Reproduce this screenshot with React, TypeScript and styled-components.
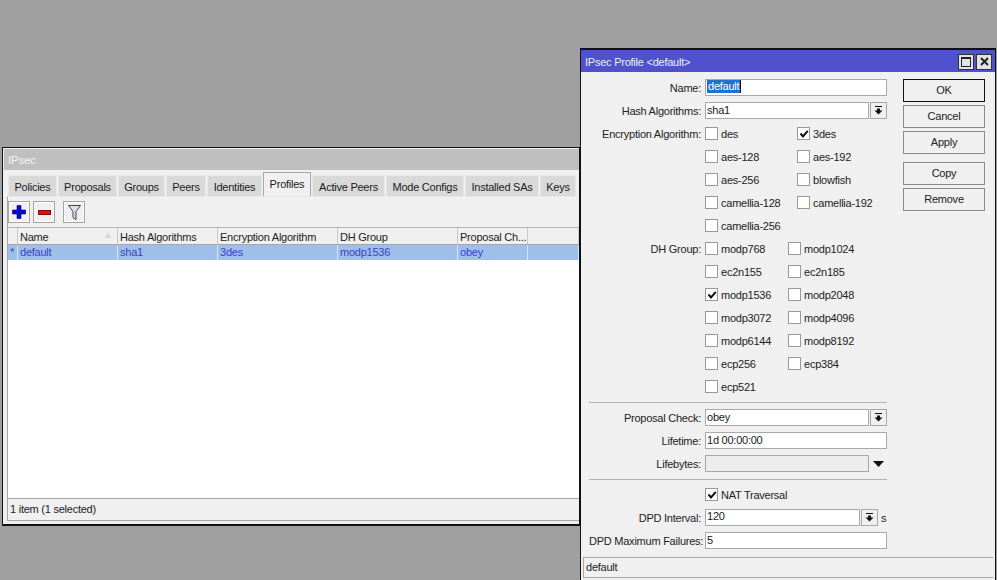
import React from "react";
import styled, { createGlobalStyle } from "styled-components";

const Global = createGlobalStyle`
  html, body { margin: 0; padding: 0; background: #a0a0a0; }
  * { box-sizing: border-box; }
`;
const Desktop = styled.div`
  position: relative; width: 997px; height: 580px; overflow: hidden; background: #a0a0a0;
  font-family: "Liberation Sans", Arial, sans-serif; font-size: 11px; letter-spacing: -0.24px; color: #1a1a1a;
`;
const MainWindow = styled.div`
  position: absolute; left: 2px; top: 147px; width: 579px; height: 379px;
  background: #f0f0f0; border: 1px solid #111; border-right-width: 2px; border-bottom-width: 2px;
  padding: 1px 0 0 2px; display: flex; flex-direction: column;
`;
const MainTitle = styled.div`
  height: 21px; background: #bfbfbf; color: #f4f4f4; font-size: 11.5px; line-height: 22px; padding-left: 4px; margin-left: -1px; flex: none;
`;
const TabBar = styled.div`
  display: flex; height: 25px; margin: 2px 0 0 3px; align-items: flex-end; flex: none; gap: 1px;
`;
const Tab = styled.div<{ $w: number; $active?: boolean }>`
  width: ${p => p.$w}px; height: ${p => (p.$active ? 25 : 22)}px; text-align: center;
  line-height: 23px; background: ${p => (p.$active ? "#f0f0f0" : "#d9d9d9")};
  border: 1px solid ${p => (p.$active ? "#a6a6a6" : "#e6e6e6")}; border-bottom: none; white-space: nowrap;
`;
const Panel = styled.div`
  flex: 1; display: flex; flex-direction: column; margin: -1px 0 3px 2px; border-left: 1px solid #a8a8a8; border-bottom: 1px solid #a6a6a6; border-top: 1px solid #e8e8e8; min-height: 0;
`;
const Toolbar = styled.div`
  display: flex; height: 30px; padding: 4px 0 0 0; flex: none;
`;
const ToolBtn = styled.div<{ $gap?: number }>`
  width: 22px; height: 22px; margin-right: ${p => p.$gap ?? 0}px; background: #f0f0f0; border: 1px solid #a4a4a4; box-shadow: inset 0 0 0 1px #fff;
  display: flex; align-items: center; justify-content: center; flex: none;
`;
const GRID = "10px 100px 100px 120px 120px 70px 1fr";
const HeaderRow = styled.div`
  display: grid; grid-template-columns: ${GRID}; height: 18px; background: #f0f0f0; flex: none;
  border-top: 1px solid #b4b4b4; border-bottom: 1px solid #a6a6a6;
`;
const HeadCell = styled.div`
  position: relative; padding-left: 2px; line-height: 18px; border-right: 1px solid #c8c8c8; white-space: nowrap; overflow: hidden; color: #222;
`;
const SortMark = styled.span`
  position: absolute; right: 6px; top: 4px; width: 0; height: 0; border-left: 3px solid transparent; border-right: 3px solid transparent; border-bottom: 6px solid #d8d8d8;
`;
const DataRow = styled.div`
  display: grid; grid-template-columns: ${GRID}; height: 15px; background: #9dbfe8; color: #3c3fc8; flex: none;
`;
const DataCell = styled.div`
  padding-left: 2px; line-height: 14px; border-right: 1px solid #d6e4f5; white-space: nowrap;
`;
const TableBody = styled.div`
  flex: 1; background: #fff; border-bottom: 1px solid #a6a6a6;
`;
const ItemCount = styled.div`
  height: 21px; line-height: 21px; padding-left: 2px; flex: none; color: #1a1a2a;
`;

const Dialog = styled.div`
  position: absolute; left: 580px; top: 48px; width: 416px; height: 532px; background: #f0f0f0;
  border: 2px solid #111; border-right-width: 1px; border-left-width: 1px; border-bottom: none; display: flex; flex-direction: column;
`;
const DlgTitle = styled.div`
  height: 22px; background: #4f52cc; color: #eef; font-size: 11px; line-height: 22px; padding: 1px 3px 0 4px; display: flex; align-items: center; justify-content: space-between; flex: none;
`;
const WinBtns = styled.div`display: flex; gap: 2px;`;
const WinBtn = styled.div`
  width: 16px; height: 16px; background: #e2e2e2; border: 1px solid #333; display: flex; align-items: center; justify-content: center;
`;
const DlgBody = styled.div`
  flex: 1; display: flex; min-height: 0; padding: 4px 0 0 8px;
`;
const Form = styled.div`
  width: 298px; flex: none; display: flex; flex-direction: column;
`;
const Row = styled.div`
  display: grid; grid-template-columns: 113px 1fr; column-gap: 3px; height: 23px; align-items: center; flex: none;
`;
const Label = styled.div`
  text-align: right; white-space: nowrap; color: #222; padding-right: 1px;
`;
const FieldWrap = styled.div`
  display: flex; align-items: center; height: 17px;
`;
const Input = styled.div<{ $top?: boolean; $off?: boolean }>`
  flex: 1; height: 17px; background: ${p => (p.$off ? "#ececec" : "#fff")}; border: 1px solid #a8a8a8; padding-left: 1px;
  line-height: ${p => (p.$top ? 12 : 15)}px; white-space: nowrap; color: #1a1a1a; min-width: 0;
`;
const Selected = styled.span`
  background: #1a74d8; color: #fff; padding: 0 1px; display: inline-block; height: 13px; line-height: 13px; vertical-align: top; border-right: 1px solid #111;
`;
const DropBtn = styled.div`
  width: 17px; height: 17px; margin-left: 1px; border: 1px solid #a8a8a8; background: #f0f0f0; display: flex; align-items: center; justify-content: center; flex: none;
`;
const Unit = styled.span`margin-left: 3px; width: 6px; flex: none;`;
const PlainArrow = styled.div`
  width: 18px; display: flex; justify-content: center; flex: none;
`;
const Checks = styled.div<{ $second: number }>`
  display: grid; grid-template-columns: ${p => p.$second}px 1fr; align-items: center; height: 100%;
`;
const CheckItem = styled.label`
  display: flex; align-items: center; gap: 3px; white-space: nowrap; color: #222;
`;
const Box = styled.span`
  width: 13px; height: 13px; background: #fff; border: 1px solid #999; display: inline-flex; align-items: center; justify-content: center; flex: none;
`;
const Sep = styled.div`
  height: 8px; flex: none; display: flex; align-items: center;
  &::before { content: ""; display: block; width: 100%; height: 1px; background: #b4b4b4; }
`;
const Buttons = styled.div`
  margin: 3px 0 0 16px; width: 82px; display: flex; flex-direction: column; flex: none;
`;
const Btn = styled.div<{ $primary?: boolean; $mt?: number }>`
  height: 23px; margin-top: ${p => p.$mt ?? 3}px; border: 1px solid ${p => (p.$primary ? "#111" : "#8a8a8a")}; background: #f0f0f0;
  text-align: center; line-height: 21px; color: #222; flex: none;
  &:first-child { margin-top: 0; }
`;
const DlgStatus = styled.div`
  height: 21px; margin: 0 2px 2px 2px; border-top: 1px solid #a8a8a8; border-left: 1px solid #a8a8a8; border-bottom: 1px solid #a8a8a8; line-height: 19px; padding-left: 2px; flex: none; color: #222;
`;

const Tick = () => (
  <svg width="10" height="10" viewBox="0 0 10 10"><path d="M1.5 4.5 L4 7.5 L8.8 1.8" fill="none" stroke="#111" strokeWidth="2" /></svg>
);
const Check = ({ label, on }: { label: string; on?: boolean }) => (
  <CheckItem><Box>{on && <Tick />}</Box>{label}</CheckItem>
);
const DropIcon = () => (
  <svg width="9" height="9" viewBox="0 0 9 9"><path d="M1 0H8V1H1Z M3 2.5H6V4.5H8.5L4.5 8.5L0.5 4.5H3Z" fill="#111" /></svg>
);
const Arrow = () => (
  <svg width="11" height="6" viewBox="0 0 11 6"><path d="M0 0H11L5.5 6Z" fill="#111" /></svg>
);

const tabs: [string, number][] = [
  ["Policies", 49], ["Proposals", 59], ["Groups", 47], ["Peers", 40], ["Identities", 55], ["Profiles", 48],
  ["Active Peers", 73], ["Mode Configs", 78], ["Installed SAs", 74], ["Keys", 36],
];
const enc: [string, boolean, string, boolean][] = [
  ["des", false, "3des", true], ["aes-128", false, "aes-192", false], ["aes-256", false, "blowfish", false],
  ["camellia-128", false, "camellia-192", false],
];
const dh: [string, boolean, string, boolean][] = [
  ["modp768", false, "modp1024", false], ["ec2n155", false, "ec2n185", false], ["modp1536", true, "modp2048", false],
  ["modp3072", false, "modp4096", false], ["modp6144", false, "modp8192", false], ["ecp256", false, "ecp384", false],
];

export default function App() {
  return (
    <Desktop>
      <Global />
      <MainWindow>
        <MainTitle>IPsec</MainTitle>
        <TabBar>
          {tabs.map(([t, w]) => <Tab key={t} $w={w} $active={t === "Profiles"}>{t}</Tab>)}
        </TabBar>
        <Panel>
          <Toolbar>
            <ToolBtn $gap={3}>
              <svg width="14" height="14" viewBox="0 0 14 14"><path d="M5 0.5H9V5H13.5V9H9V13.5H5V9H0.5V5H5Z" fill="#0808d8" stroke="#000050" strokeWidth="0.6" /></svg>
            </ToolBtn>
            <ToolBtn $gap={8}>
              <svg width="13" height="5" viewBox="0 0 13 5"><rect x="0.5" y="0.5" width="12" height="4" fill="#e01010" stroke="#801010" /></svg>
            </ToolBtn>
            <ToolBtn>
              <svg width="13" height="15" viewBox="0 0 13 15"><path d="M0.5 0.5H12.5L8 6.5V14.5L5 12.5V6.5Z" fill="#d4e2ee" stroke="#444" strokeWidth="1" /></svg>
            </ToolBtn>
          </Toolbar>
          <HeaderRow>
            <HeadCell />
            <HeadCell>Name<SortMark /></HeadCell>
            <HeadCell>Hash Algorithms</HeadCell>
            <HeadCell>Encryption Algorithm</HeadCell>
            <HeadCell>DH Group</HeadCell>
            <HeadCell>Proposal Ch...</HeadCell>
            <HeadCell />
          </HeaderRow>
          <DataRow>
            <DataCell>*</DataCell>
            <DataCell>default</DataCell>
            <DataCell>sha1</DataCell>
            <DataCell>3des</DataCell>
            <DataCell>modp1536</DataCell>
            <DataCell>obey</DataCell>
            <DataCell />
          </DataRow>
          <TableBody />
          <ItemCount>1 item (1 selected)</ItemCount>
        </Panel>
      </MainWindow>

      <Dialog>
        <DlgTitle>
          <span>IPsec Profile &lt;default&gt;</span>
          <WinBtns>
            <WinBtn><svg width="10" height="10" viewBox="0 0 10 10"><rect x="0.5" y="0.5" width="9" height="9" fill="none" stroke="#222" /><rect x="0" y="0" width="10" height="2" fill="#222" /></svg></WinBtn>
            <WinBtn><svg width="9" height="9" viewBox="0 0 9 9"><path d="M1 1L8 8M8 1L1 8" stroke="#222" strokeWidth="2" /></svg></WinBtn>
          </WinBtns>
        </DlgTitle>
        <DlgBody>
          <Form>
            <Row><Label>Name:</Label><FieldWrap><Input><Selected>default</Selected></Input></FieldWrap></Row>
            <Row><Label>Hash Algorithms:</Label><FieldWrap><Input>sha1</Input><DropBtn><DropIcon /></DropBtn></FieldWrap></Row>
            {enc.map((r, i) => (
              <Row key={r[0]}>
                <Label>{i === 0 ? "Encryption Algorithm:" : ""}</Label>
                <Checks $second={92}><Check label={r[0]} on={r[1]} /><Check label={r[2]} on={r[3]} /></Checks>
              </Row>
            ))}
            <Row><Label /><Check label="camellia-256" /></Row>
            {dh.map((r, i) => (
              <Row key={r[0]}>
                <Label>{i === 0 ? "DH Group:" : ""}</Label>
                <Checks $second={83}><Check label={r[0]} on={r[1]} /><Check label={r[2]} on={r[3]} /></Checks>
              </Row>
            ))}
            <Row><Label /><Check label="ecp521" /></Row>
            <Sep />
            <Row><Label>Proposal Check:</Label><FieldWrap><Input>obey</Input><DropBtn><DropIcon /></DropBtn></FieldWrap></Row>
            <Row><Label>Lifetime:</Label><FieldWrap><Input>1d 00:00:00</Input></FieldWrap></Row>
            <Row><Label>Lifebytes:</Label><FieldWrap><Input $off /><PlainArrow><Arrow /></PlainArrow></FieldWrap></Row>
            <Sep />
            <Row><Label /><Check label="NAT Traversal" on /></Row>
            <Row><Label>DPD Interval:</Label><FieldWrap><Input $top>120</Input><DropBtn><DropIcon /></DropBtn><Unit>s</Unit></FieldWrap></Row>
            <Row><Label>DPD Maximum Failures:</Label><FieldWrap><Input>5</Input></FieldWrap></Row>
          </Form>
          <Buttons>
            <Btn $primary>OK</Btn>
            <Btn>Cancel</Btn>
            <Btn>Apply</Btn>
            <Btn $mt={8}>Copy</Btn>
            <Btn>Remove</Btn>
          </Buttons>
        </DlgBody>
        <DlgStatus>default</DlgStatus>
      </Dialog>
    </Desktop>
  );
}
